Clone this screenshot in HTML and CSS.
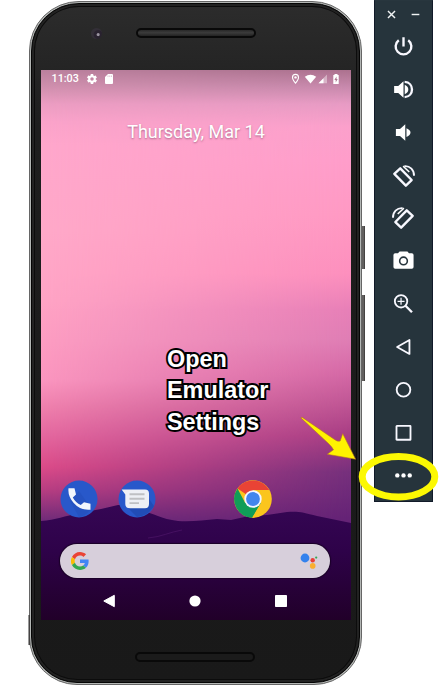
FILE: index.html
```html
<!DOCTYPE html>
<html lang="en">
<head>
<meta charset="utf-8">
<title>Android Emulator</title>
<link rel="stylesheet" href="styles.css">
</head>
<body>
<main class="stage">
  <section class="phone">
    <i class="side-key power-key"></i><i class="side-key volume-key"></i><i class="side-key left-key"></i>
    <div class="bezel">
      <header class="forehead"><i class="camera"></i><i class="speaker"></i></header>
      <div class="screen">
        <div class="wallpaper"></div>
        <svg class="hills" viewBox="0 0 310 110">
          <defs><linearGradient id="hill" x1="0" y1="0" x2="0" y2="1"><stop offset="0" stop-color="#350654"/><stop offset=".4" stop-color="#2e0249"/><stop offset="1" stop-color="#210029"/></linearGradient></defs>
          <path fill="url(#hill)" d="M0 11C15 10 24 6 38 3L60-1L77-5C83-5 92-2 102 1C112 3 120 9 137 11C151 12 163 10 176 9L190 10L208 6L226 5L246 2C256 1 262 2 276 6L310 13V110H0Z"/>
          <path fill="none" stroke="#4e1568" stroke-width=".7" d="M107 28C120 27 129 22 141 20"/>
        </svg>
        <div class="status">
          <span class="clock">11:03</span>
          <svg class="gear" viewBox="0 0 24 24"><path fill="#fff" fill-rule="evenodd" d="M19.4 13a7.5 7.5 0 0 0 0-2l2.1-1.6c.2-.2.2-.4.1-.6l-2-3.5c-.1-.2-.4-.3-.6-.2l-2.5 1a7.3 7.3 0 0 0-1.7-1L14.400 2.400c0-.2-.2-.4-.5-.4h-4c-.2 0-.4.200-.5.400L9 5.100a7.300 7.300 0 0 0-1.700 1l-2.500-1c-.2-.1-.5 0-.6.200l-2 3.500c-.1.200-.1.500.1.600L4.500 11a7.500 7.500 0 0 0 0 2l-2.100 1.600c-.2.200-.2.400-.1.600l2 3.500c.1.200.4.300.6.200l2.500-1c.5.400 1.100.7 1.700 1l.4 2.700c0 .2.200.400.5.400h4c.2 0 .4-.2.500-.4l.4-2.700a7.300 7.300 0 0 0 1.700-1l2.500 1c.2.100.5 0 .6-.2l2-3.500c.1-.2.1-.5-.1-.6ZM12 8.500a3.500 3.500 0 1 1 0 7a3.500 3.500 0 0 1 0-7Z"/></svg>
          <svg class="sd" viewBox="0 0 16 20"><path fill="#fff" d="M6 0H14Q16 0 16 2V18Q16 20 14 20H2Q0 20 0 18V6Z"/><path stroke="#c493ae" stroke-width="1" d="M6 3V6M9.500 3V6M13 3V6"/></svg>
          <svg class="indicators" viewBox="0 0 50 12">
            <path fill="none" stroke="#fff" stroke-width="1.100" d="M4.500 10.200C2.600 7.700 1.500 6 1.500 4.400A3 3 0 0 1 7.500 4.400C7.500 6 6.400 7.700 4.500 10.200Z"/><circle cx="4.500" cy="4.400" r="1.200" fill="#fff"/>
            <path fill="#fff" d="M13.800 3.800Q19.500-.5 25.200 3.800L19.500 10.500Z"/>
            <path fill="#fff" fill-opacity=".4" d="M27.500 10.300L36 1.500V10.300Z"/><path fill="#fff" d="M27.500 10.300L32.500 5.200V10.300Z"/>
            <path fill="#fff" d="M43.500 1H46.500V2H47.700V11H42.300V2H43.500Z"/><path fill="#ad7892" d="M45.500 3.500L43.400 7H44.700V9.400L46.700 5.900H45.500Z"/>
          </svg>
        </div>
        <div class="date">Thursday, Mar 14</div>
        <div class="apps">
          <svg class="app" viewBox="0 0 38 38"><circle cx="19" cy="19" r="18.500" fill="#2858ca"/><path fill="#204bb5" d="M19 11L31 28Q27 36 19 37L10 21Z" opacity=".4"/><path fill="#f2f5fc" d="M8.500 8.200H14.500L16 14.400L12.800 17.500Q15.600 22.700 20.800 25L24 22.200L30.500 23.700V29.700Q20.600 30.800 13.700 22.900Q7.600 16 8.500 8.200Z"/></svg>
          <svg class="app" viewBox="0 0 38 38"><circle cx="19" cy="19" r="18.500" fill="#2858ca"/><path fill="#1c43a5" d="M10 28L19 37Q30 36 36 26L29 16Z" opacity=".55"/><path fill="#eef0f5" d="M3.600 9.500H27Q31 9.500 31 13.500V24Q31 28.200 27 28.200H12Q7.300 28.200 7.300 24V14.400Z"/><path stroke="#bfc0c3" stroke-width="1.900" d="M11.500 14.300H26.500M11.500 18.800H26.500M11.500 23.100H21"/></svg>
          <svg class="app chrome" viewBox="0 0 38 38"><circle cx="19" cy="19" r="18.800" fill="#fbc51d"/><path fill="#e94335" d="M19 19L3.500 8.400A18.800 18.800 0 0 1 35.300 10H19Z"/><path fill="#109d58" d="M3.500 8.400A18.800 18.800 0 0 0 18.200 37.800L27 23L11.200 23Z"/><path fill="#fbc51d" d="M26.700 23.500L18.200 37.800H20L29 20Z"/><circle cx="19" cy="19" r="8.700" fill="#f4f6ff"/><circle cx="19" cy="19" r="6.900" fill="#4285ed"/></svg>
        </div>
        <div class="search">
          <svg class="google" viewBox="0 0 48 48"><path fill="#ea4335" d="M24 9.500c3.500 0 6.700 1.200 9.200 3.600l6.900-6.900C35.900 2.400 30.500 0 24 0 14.600 0 6.500 5.400 2.600 13.200l8 6.200C12.400 13.700 17.700 9.500 24 9.500z"/><path fill="#4285f4" d="M47 24.600c0-1.600-.2-3.100-.4-4.600H24v9h12.900c-.6 3-2.300 5.500-4.800 7.200l7.700 6C44.400 38 47 31.800 47 24.600z"/><path fill="#fbbc05" d="M10.500 28.600A14.500 14.500 0 0 1 10.500 19.400l-8-6.200a24 24 0 0 0 0 21.600z"/><path fill="#34a853" d="M24 48c6.500 0 11.900-2.100 15.900-5.800l-7.700-6c-2.200 1.500-4.900 2.300-8.200 2.300-6.300 0-11.600-4.200-13.500-9.900l-8 6.200C6.500 42.600 14.600 48 24 48z"/></svg>
          <svg class="assistant" viewBox="0 0 18 16"><circle cx="5" cy="5" r="4.400" fill="#3382ed"/><circle cx="12.700" cy="7.300" r="2.200" fill="#e73e38"/><circle cx="12.700" cy="12.900" r="2.800" fill="#f9ae2f"/><circle cx="16.200" cy="4.600" r="1.100" fill="#34a853"/></svg>
        </div>
        <div class="nav">
          <svg viewBox="0 0 14 14"><path fill="#fff" stroke="#fff" stroke-linejoin="round" d="M1.800 7L12.300 1.300V12.700Z"/></svg>
          <svg viewBox="0 0 14 14"><circle cx="7" cy="7" r="5.600" fill="#fff"/></svg>
          <svg viewBox="0 0 14 14"><rect x="1" y="1" width="12" height="12" rx=".8" fill="#fff"/></svg>
        </div>
      </div>
      <footer class="chin"><i class="speaker"></i></footer>
    </div>
  </section>

  <aside class="toolbar">
    <div class="window"><svg viewBox="0 0 10 10"><path d="M1.800 1.800L8.200 8.200M8.200 1.800L1.800 8.200"/></svg><svg viewBox="0 0 10 10"><path d="M1.500 5H8.500"/></svg></div>
    <svg class="tool" viewBox="0 0 24 24"><path class="line bold" d="M6.600 4.800A9 9 0 1 0 17.400 4.800M12 1.500V12"/></svg>
    <svg class="tool" viewBox="0 0 24 24"><path class="solid" d="M1.300 8H6L12 2.500V21.500L6 16H1.300ZM13.400 6.500Q17.500 8.500 17.500 12T13.400 17.500Z"/><path class="line bold" d="M13.300 3.300C24.500 4 24.500 20 13.300 20.700"/></svg>
    <svg class="tool" viewBox="0 0 24 24"><path class="solid" d="M3.300 8H8L14 2.500V21.500L8 16H3.300ZM15.400 7Q20 9 20 12T15.400 17Z"/></svg>
    <svg class="tool" viewBox="0 0 24 24"><path class="line bold" stroke-linejoin="round" d="M8.300 3.800L21.300 17.200L14.700 23.600L1.500 10.200Z"/><path class="line" d="M13 1.300C19.500.8 24.300 5.700 24 12.300"/><path class="solid" d="M12 .5L19.200 7.500L18 8.600L11 2Z"/></svg>
    <svg class="tool" viewBox="0 0 24 24"><path class="line bold" stroke-linejoin="round" d="M15.700 3.800L2.700 17.200L9.300 23.600L22.500 10.200Z"/><path class="line" d="M11 1.300C4.500.8-.3 5.700 0 12.300"/><path class="solid" d="M12 .5L4.800 7.500L6 8.600L13 2Z"/></svg>
    <svg class="tool" viewBox="0 0 24 24"><path class="solid" fill-rule="evenodd" d="M7.500 1.800H16.500L18.300 3.800H21.500Q23.500 3.800 23.500 5.800V19.500Q23.500 21.500 21.500 21.500H2.500Q.5 21.500.5 19.500V5.800Q.5 3.800 2.500 3.800H5.700Z"/><circle cx="12" cy="12.500" r="4.400" fill="none" stroke="#26343c" stroke-width="1.800"/></svg>
    <svg class="tool" viewBox="0 0 24 24"><circle class="line" cx="9.200" cy="9.500" r="7.100"/><path class="line bold" d="M14.300 14.600L21.700 22"/><path class="line thin" d="M9.200 5.500V13.500M5.200 9.500H13.200"/></svg>
    <svg class="tool" viewBox="0 0 24 24"><path class="line" stroke-linejoin="round" d="M4.700 12.500L18.800 4.500V20.500Z"/></svg>
    <svg class="tool" viewBox="0 0 24 24"><circle class="line" cx="12" cy="12.300" r="7.800"/></svg>
    <svg class="tool" viewBox="0 0 24 24"><rect class="line" x="4" y="4.500" width="16" height="15.800" rx=".4"/></svg>
    <svg class="tool" viewBox="0 0 24 24"><circle class="solid" cx="4.900" cy="13" r="2.500"/><circle class="solid" cx="12" cy="13" r="2.500"/><circle class="solid" cx="19.100" cy="13" r="2.500"/></svg>
  </aside>

  <p class="callout">Open<br>Emulator<br>Settings</p>
  <svg class="pointer" viewBox="0 0 139 90">
    <ellipse cx="98.500" cy="61.700" rx="36.300" ry="20.300" fill="none" stroke="#fcf803" stroke-width="7"/>
    <path fill="#fff200" stroke="#b66e25" stroke-width=".6" stroke-linejoin="round" d="M.8 2.800L2 2.200L33.800 24Q37.800 27.400 40.200 25.900L42.700 18.600L55.600 44.200L27.200 39.300L33.500 34.800Q31.800 31.500 28.700 28.700Z"/>
  </svg>
</main>
</body>
</html>
```
FILE: styles.css
```css
* { box-sizing: border-box; }
body { margin: 0; background: #fff; font-family: Roboto, "Liberation Sans", sans-serif; }
svg { display: block; flex: none; }
.stage { position: relative; display: flex; align-items: flex-start; gap: 12px; width: 439px; height: 696px; padding-left: 29px; overflow: hidden; }

.phone { position: relative; width: 333px; height: 684px; margin-top: 1px; padding: 1px; border: 1px solid #666; border-radius: 50px 50px 48px 48px; background: #b4b7b5; }
.bezel { height: 680px; padding: 0 10px 0 9px; border: 1px solid #050505; border-radius: 48px 48px 46px 46px; background: linear-gradient(#2c2c2c, #1e1e1e 18%, #191919); box-shadow: inset 0 0 0 2px #222, inset 0 0 0 3px #0c0c0c; }
.side-key { position: absolute; width: 3px; background: #62605f; border-right: 1px solid #454342; }
.power-key { right: -4px; top: 224px; height: 43px; }
.volume-key { right: -4px; top: 293px; height: 86px; }
.left-key { left: -2px; top: 613px; height: 30px; width: 2px; background: #999; }
.forehead { display: flex; height: 66px; padding: 24px 0 0 50px; align-items: flex-start; }
.camera { width: 11px; height: 11px; border-radius: 50%; background: radial-gradient(circle at 65% 60%, #9b95a1 0 1px, #29222f 2px 4px, #332f37 5px); }
.speaker { display: block; width: 120px; height: 10px; border: 2px solid #090909; border-radius: 5px; background: linear-gradient(#282828, #3b3b3b 45%, #222); }
.forehead .speaker { margin-left: 34px; }
.chin { display: flex; justify-content: center; padding-top: 32px; }
.chin .speaker { background: #1b1b1b; }

.screen { position: relative; display: flex; flex-direction: column; width: 310px; height: 550px; overflow: hidden; }
.wallpaper { position: absolute; inset: 0; background: linear-gradient(#bb819e 0, #cf8fad 16px, #ec9dc2 34px, #faa3ca 52px, #ffa7cc 75px, #ffa9c9 160px, #ffa4c5 230px, #fb96bf 310px, #f081ae 336px, #e5689f 365px, #dc4b89 397px, #b83e82 420px, #722c79 450px); }
.wallpaper::after { content: ""; position: absolute; inset: 0; background: linear-gradient(#ab718e 0, #c688ab 16px, #e79bc4 34px, #fba0cb 57px, #ff9dca 90px, #ff99c3 145px, #fd8fbd 204px, #e77fb7 240px, #df7db4 270px, #d569a6 302px, #bf5594 334px, #a63c83 366px, #75307c 402px, #652376 448px); -webkit-mask-image: linear-gradient(90deg, transparent, #000); mask-image: linear-gradient(90deg, transparent, #000); }
.hills { position: absolute; left: 0; bottom: 0; width: 310px; height: 110px; overflow: visible; }
.status, .date, .apps, .search, .nav { position: relative; }
.status { display: flex; align-items: center; height: 18px; padding: 0 10px 0 10.500px; color: #fff; }
.clock { width: 34px; font-size: 10.800px; line-height: 18px; font-weight: 500; }
.gear { width: 12px; height: 12px; }
.sd { width: 8px; height: 10px; margin-left: 7px; }
.indicators { width: 50px; height: 12px; margin-left: auto; }
.date { height: 24px; margin-top: 32px; color: #fff; font-size: 18px; line-height: 24px; text-align: center; text-shadow: 0 1px 2px #82496aaa; white-space: nowrap; }
.apps { display: grid; grid-template-columns: repeat(5, 58px); margin: 336px 0 0 19px; }
.app { width: 38px; height: 38px; }
.app.chrome { grid-column: 4; margin-left: -.5px; }
.search { display: flex; align-items: center; justify-content: space-between; height: 34px; margin: 26px 21px 0 19px; padding: 0 12px 0 11px; border-radius: 17px; background: #d7cfdb; box-shadow: 0 0 1px 1px #190026; }
.google { width: 18px; height: 18px; }
.assistant { width: 18px; height: 16px; }
.nav { display: flex; justify-content: space-between; margin-top: 16px; padding: 0 63px 0 61px; }
.nav svg { width: 14px; height: 14px; }

.toolbar { width: 59px; height: 502px; border: 1px solid #111a29; border-top-color: #28363e; background: #26343c; }
.window { display: flex; justify-content: space-between; width: 35px; height: 24px; margin: 0 0 0 11px; padding-top: 8px; }
.window svg { width: 11px; height: 11px; fill: none; stroke: #f0f3f4; stroke-width: 1.300; }
.tool { width: 21px; height: 21px; margin: 11px 0 21.850px 17.700px; overflow: visible; }
.tool + .tool { margin-top: 0; }
.solid { fill: #fff; }
.line { fill: none; stroke: #f8f8ff; stroke-width: 2.100; }
.bold { stroke-width: 2.700; }
.thin { stroke-width: 1.400; }

.callout { position: absolute; left: 167px; top: 344px; margin: 0; color: #fff; font: bold 23.400px/31.300px "Liberation Sans", sans-serif; -webkit-text-stroke: 4px #000; paint-order: stroke fill; }
.pointer { position: absolute; left: 300px; top: 415px; width: 139px; height: 90px; }
```
